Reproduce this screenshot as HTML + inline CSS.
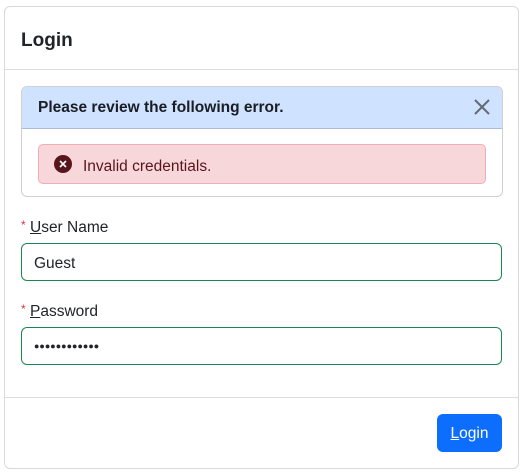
<!DOCTYPE html>
<html><head><style>
body{margin:0;width:524px;height:474px;background:#fff;font-family:"Liberation Sans",sans-serif;color:#212529;position:relative;overflow:hidden}
.a{position:absolute;box-sizing:border-box}
</style></head><body>
<div class="a" style="left:4px;top:6px;width:515px;height:463px;border:1px solid #d9d9d9;border-radius:6px"></div>
<div class="a" style="left:21px;top:30px;font-size:19px;font-weight:bold">Login</div>
<div class="a" style="left:5px;top:69px;width:513px;height:1px;background:#dcdcdc"></div>
<div class="a" style="left:21px;top:86px;width:482px;height:111px;border:1px solid #d0d0d0;border-radius:6px;overflow:hidden">
 <div style="height:41px;background:#cfe2ff;border-bottom:1px solid #a9bcdc"></div>
</div>
<div class="a" style="left:38px;top:99px;font-size:15.5px;font-weight:bold;color:#1a1e24">Please review the following error.</div>
<svg class="a" style="left:473px;top:98px" width="18" height="18" viewBox="0 0 18 18"><path d="M2 2L16 16M16 2L2 16" stroke="#646a72" stroke-width="2"/></svg>
<div class="a" style="left:38px;top:144px;width:448px;height:40px;background:#f8d7da;border:1px solid #f1aeb5;border-radius:5px"></div>
<svg class="a" style="left:54px;top:155px" width="18" height="18" viewBox="0 0 18 18"><circle cx="9" cy="9" r="9" fill="#58151c"/><path d="M6 6L12 12M12 6L6 12" stroke="#fff" stroke-width="1.6"/></svg>
<div class="a" style="left:83px;top:158px;font-size:15.5px;color:#58151c">Invalid credentials.</div>
<div class="a" style="left:21px;top:218px;font-size:15.5px"><span style="color:#dc3545;font-size:12px;vertical-align:3px">*</span> <u>U</u>ser Name</div>
<div class="a" style="left:21px;top:243px;width:481px;height:38px;border:1px solid #198754;border-radius:6px;font-size:15.5px;padding:11px 12px">Guest</div>
<div class="a" style="left:21px;top:302px;font-size:15.5px"><span style="color:#dc3545;font-size:12px;vertical-align:3px">*</span> <u>P</u>assword</div>
<div class="a" style="left:21px;top:327px;width:481px;height:38px;border:1px solid #198754;border-radius:6px;font-size:9px;padding:13px 12px;letter-spacing:0px">●●●●●●●●●●●●</div>
<div class="a" style="left:5px;top:397px;width:513px;height:1px;background:#dcdcdc"></div>
<div class="a" style="left:437px;top:414px;width:65px;height:38px;background:#0d6efd;border-radius:6px;color:#fff;font-size:15.5px;text-align:center;line-height:40px"><u>L</u>ogin</div>
</body></html>
